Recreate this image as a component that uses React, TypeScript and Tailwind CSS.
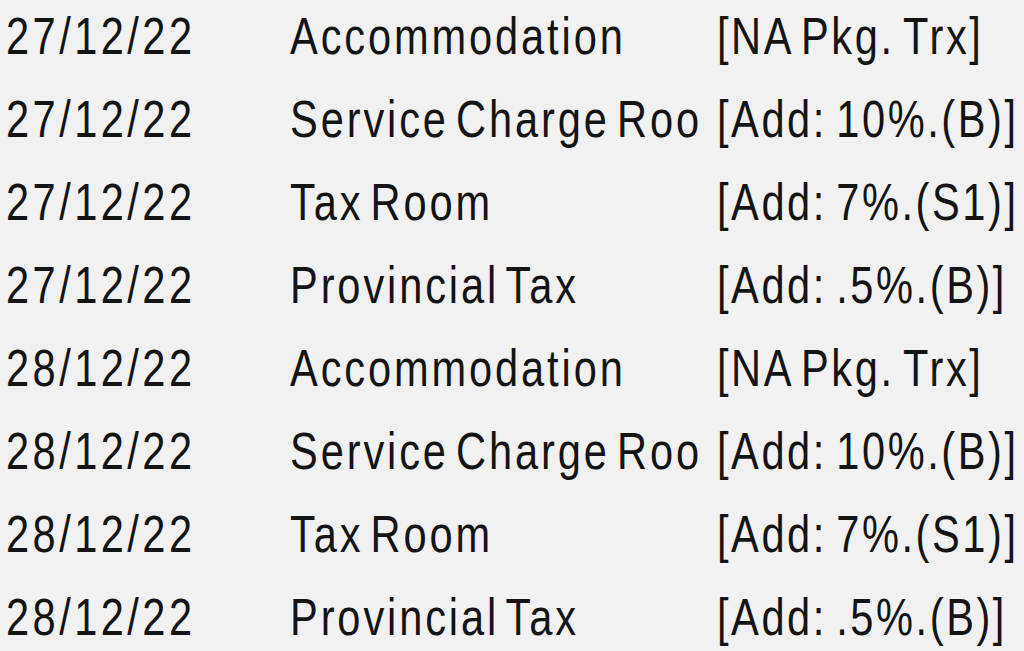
const rows = [
  { date: "27/12/22", desc: "Accommodation", note: "[NA Pkg. Trx]" },
  { date: "27/12/22", desc: "Service Charge Roo", note: "[Add: 10%.(B)]" },
  { date: "27/12/22", desc: "Tax Room", note: "[Add: 7%.(S1)]" },
  { date: "27/12/22", desc: "Provincial Tax", note: "[Add: .5%.(B)]" },
  { date: "28/12/22", desc: "Accommodation", note: "[NA Pkg. Trx]" },
  { date: "28/12/22", desc: "Service Charge Roo", note: "[Add: 10%.(B)]" },
  { date: "28/12/22", desc: "Tax Room", note: "[Add: 7%.(S1)]" },
  { date: "28/12/22", desc: "Provincial Tax", note: "[Add: .5%.(B)]" },
];

function Cell({ children, className }: { children: string; className: string }) {
  return (
    <div className="whitespace-nowrap">
      <span className={"inline-block origin-left scale-x-[0.8] " + className}>{children}</span>
    </div>
  );
}

export default function App() {
  return (
    <div className="h-[651px] w-[1024px] overflow-hidden bg-[#f1f1f1] text-[#141414] font-['Liberation_Sans',Arial,sans-serif]">
      <div className="-mt-[5px] pl-[6px] text-[52px] leading-[83px]">
        {rows.map((r, i) => (
          <div key={i} className="grid grid-cols-[284px_427px_1fr]">
            <Cell className="tracking-[4.3px]">{r.date}</Cell>
            <Cell className="tracking-[3.6px] [word-spacing:-9px]">{r.desc}</Cell>
            <Cell className="tracking-[3.2px] [word-spacing:-6px]">{r.note}</Cell>
          </div>
        ))}
      </div>
    </div>
  );
}
